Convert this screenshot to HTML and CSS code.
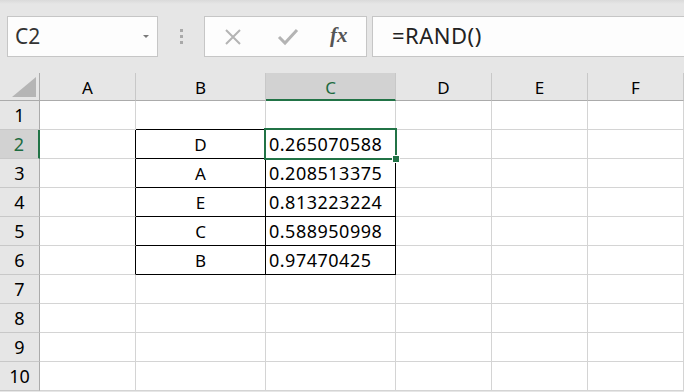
FILE: index.html
```html
<!DOCTYPE html>
<html lang="ja">
<head>
  <title>Book1 - Excel</title>
  <link rel="stylesheet" href="styles.css">
</head>
<body>
  <div class="formula-bar">
    <div class="name-box">
      <span>C2</span>
      <span class="drop"></span>
    </div>
    <div class="grip"><i></i><i></i><i></i></div>
    <div class="buttons">
      <svg class="btn-x" width="20" height="20" viewBox="0 0 20 20">
        <path d="M3 3 L17 17 M17 3 L3 17" stroke="#b4b4b4" stroke-width="2" fill="none"/>
      </svg>
      <svg class="btn-ok" width="22" height="20" viewBox="0 0 22 20">
        <path d="M2 10 L8 16 L20 3" stroke="#b4b4b4" stroke-width="3" fill="none"/>
      </svg>
      <span class="fx">fx</span>
    </div>
    <div class="formula">=RAND()</div>
  </div>

  <div class="sheet">
    <div class="corner">
      <svg width="24" height="20" viewBox="0 0 24 20"><polygon points="24,0 24,20 0,20" fill="#b5b5b5"/></svg>
    </div>
    <div class="col-head">A</div>
    <div class="col-head">B</div>
    <div class="col-head active">C</div>
    <div class="col-head">D</div>
    <div class="col-head">E</div>
    <div class="col-head">F</div>

    <div class="row-head">1</div>
    <div class="cell"></div>
    <div class="cell top"></div>
    <div class="cell top"></div>
    <div class="cell"></div><div class="cell"></div><div class="cell"></div>

    <div class="row-head active">2</div>
    <div class="cell left"></div>
    <div class="cell box center">D</div>
    <div class="cell box num selected">0.265070588<div class="cursor"><span class="handle"></span></div></div>
    <div class="cell"></div><div class="cell"></div><div class="cell"></div>

    <div class="row-head">3</div>
    <div class="cell left"></div>
    <div class="cell box center">A</div>
    <div class="cell box num">0.208513375</div>
    <div class="cell"></div><div class="cell"></div><div class="cell"></div>

    <div class="row-head">4</div>
    <div class="cell left"></div>
    <div class="cell box center">E</div>
    <div class="cell box num">0.813223224</div>
    <div class="cell"></div><div class="cell"></div><div class="cell"></div>

    <div class="row-head">5</div>
    <div class="cell left"></div>
    <div class="cell box center">C</div>
    <div class="cell box num">0.588950998</div>
    <div class="cell"></div><div class="cell"></div><div class="cell"></div>

    <div class="row-head">6</div>
    <div class="cell left"></div>
    <div class="cell box center">B</div>
    <div class="cell box num">0.97470425</div>
    <div class="cell"></div><div class="cell"></div><div class="cell"></div>

    <div class="row-head">7</div>
    <div class="cell"></div><div class="cell"></div><div class="cell"></div>
    <div class="cell"></div><div class="cell"></div><div class="cell"></div>

    <div class="row-head">8</div>
    <div class="cell"></div><div class="cell"></div><div class="cell"></div>
    <div class="cell"></div><div class="cell"></div><div class="cell"></div>

    <div class="row-head">9</div>
    <div class="cell"></div><div class="cell"></div><div class="cell"></div>
    <div class="cell"></div><div class="cell"></div><div class="cell"></div>

    <div class="row-head">10</div>
    <div class="cell"></div><div class="cell"></div><div class="cell"></div>
    <div class="cell"></div><div class="cell"></div><div class="cell"></div>
  </div>
</body>
</html>
```

FILE: styles.css
```css
body {
  margin: 0;
  width: 684px;
  height: 392px;
  overflow: hidden;
  background: #e6e6e6;
  font-family: "Noto Sans", "Open Sans", sans-serif;
  color: #000;
}

/* formula bar */
.formula-bar {
  display: flex;
  align-items: center;
  height: 73px;
  padding-left: 7px;
  box-sizing: border-box;
  background: linear-gradient(#dadada, #e6e6e6 4px);
}

.name-box {
  width: 151px;
  height: 41px;
  box-sizing: border-box;
  background: #fdfdfd;
  border: 1px solid #c6c6c6;
  display: flex;
  align-items: center;
  justify-content: space-between;
  padding: 0 8px 2px 7px;
  font-size: 21px;
  color: #333;
}

.drop {
  width: 0;
  height: 0;
  border-left: 3px solid transparent;
  border-right: 3px solid transparent;
  border-top: 3px solid #7a7a7a;
  margin-top: 2px;
}

.grip {
  width: 46px;
  display: flex;
  flex-direction: column;
  align-items: center;
  gap: 3px;
}

.grip i {
  width: 3px;
  height: 3px;
  background: #a9a9a9;
}

.buttons {
  width: 163px;
  height: 41px;
  box-sizing: border-box;
  background: #fdfdfd;
  border: 1px solid #c6c6c6;
  display: flex;
  align-items: center;
  padding-left: 18px;
}

.btn-x {
  margin-right: 34px;
}

.btn-ok {
  margin-right: 31px;
}

.fx {
  font-family: "Liberation Serif", serif;
  font-style: italic;
  font-weight: bold;
  font-size: 21px;
  color: #555;
  margin-top: -3px;
}

.formula {
  flex: 1;
  height: 41px;
  box-sizing: border-box;
  margin-left: 5px;
  background: #fdfdfd;
  border: 1px solid #c6c6c6;
  border-right: none;
  padding: 0 0 3px 19px;
  display: flex;
  align-items: center;
  font-size: 22px;
  letter-spacing: 0.5px;
  color: #222;
}

/* grid */
.sheet {
  display: grid;
  grid-template-columns: 40px 96px 130px 130px 96px 96px 96px;
  grid-template-rows: 28px repeat(10, 29px);
  background: #fff;
}

.sheet > div {
  box-sizing: border-box;
  border-right: 1px solid #d4d4d4;
  border-bottom: 1px solid #d4d4d4;
  display: flex;
  align-items: center;
  font-size: 17px;
}

.corner {
  background: #e6e6e6;
  align-items: flex-end !important;
  justify-content: flex-end;
  padding: 0 3px 3px 0;
  border-color: #ababab !important;
}

.col-head {
  background: #e6e6e6;
  justify-content: center;
  border-right-color: #c8c8c8 !important;
  border-bottom-color: #ababab !important;
  padding-top: 2px;
}

.col-head.active {
  background: #d2d2d2;
  color: #1d6b40;
  border-bottom: 2px solid #217346 !important;
}

.row-head {
  background: #e6e6e6;
  justify-content: center;
  border-right-color: #ababab !important;
  border-bottom-color: #c8c8c8 !important;
  font-size: 18px !important;
}

.row-head.active {
  background: #d2d2d2;
  color: #1d6b40;
  border-right: 2px solid #217346 !important;
}

.cell.top {
  border-bottom-color: #000 !important;
}

.cell.left {
  border-right-color: #000 !important;
}

.cell.box {
  border-right-color: #000 !important;
  border-bottom-color: #000 !important;
}

.cell.center {
  justify-content: center;
}

.cell.num {
  padding-left: 3px;
  letter-spacing: 0.5px;
  font-size: 18px;
}

.cell.selected {
  position: relative;
}

.cursor {
  position: absolute;
  top: -2px;
  left: -2px;
  right: -2px;
  bottom: -2px;
  border: 2px solid #217346;
}

.handle {
  position: absolute;
  right: -5px;
  bottom: -5px;
  width: 6px;
  height: 6px;
  background: #217346;
  border: 1px solid #fff;
}
```
